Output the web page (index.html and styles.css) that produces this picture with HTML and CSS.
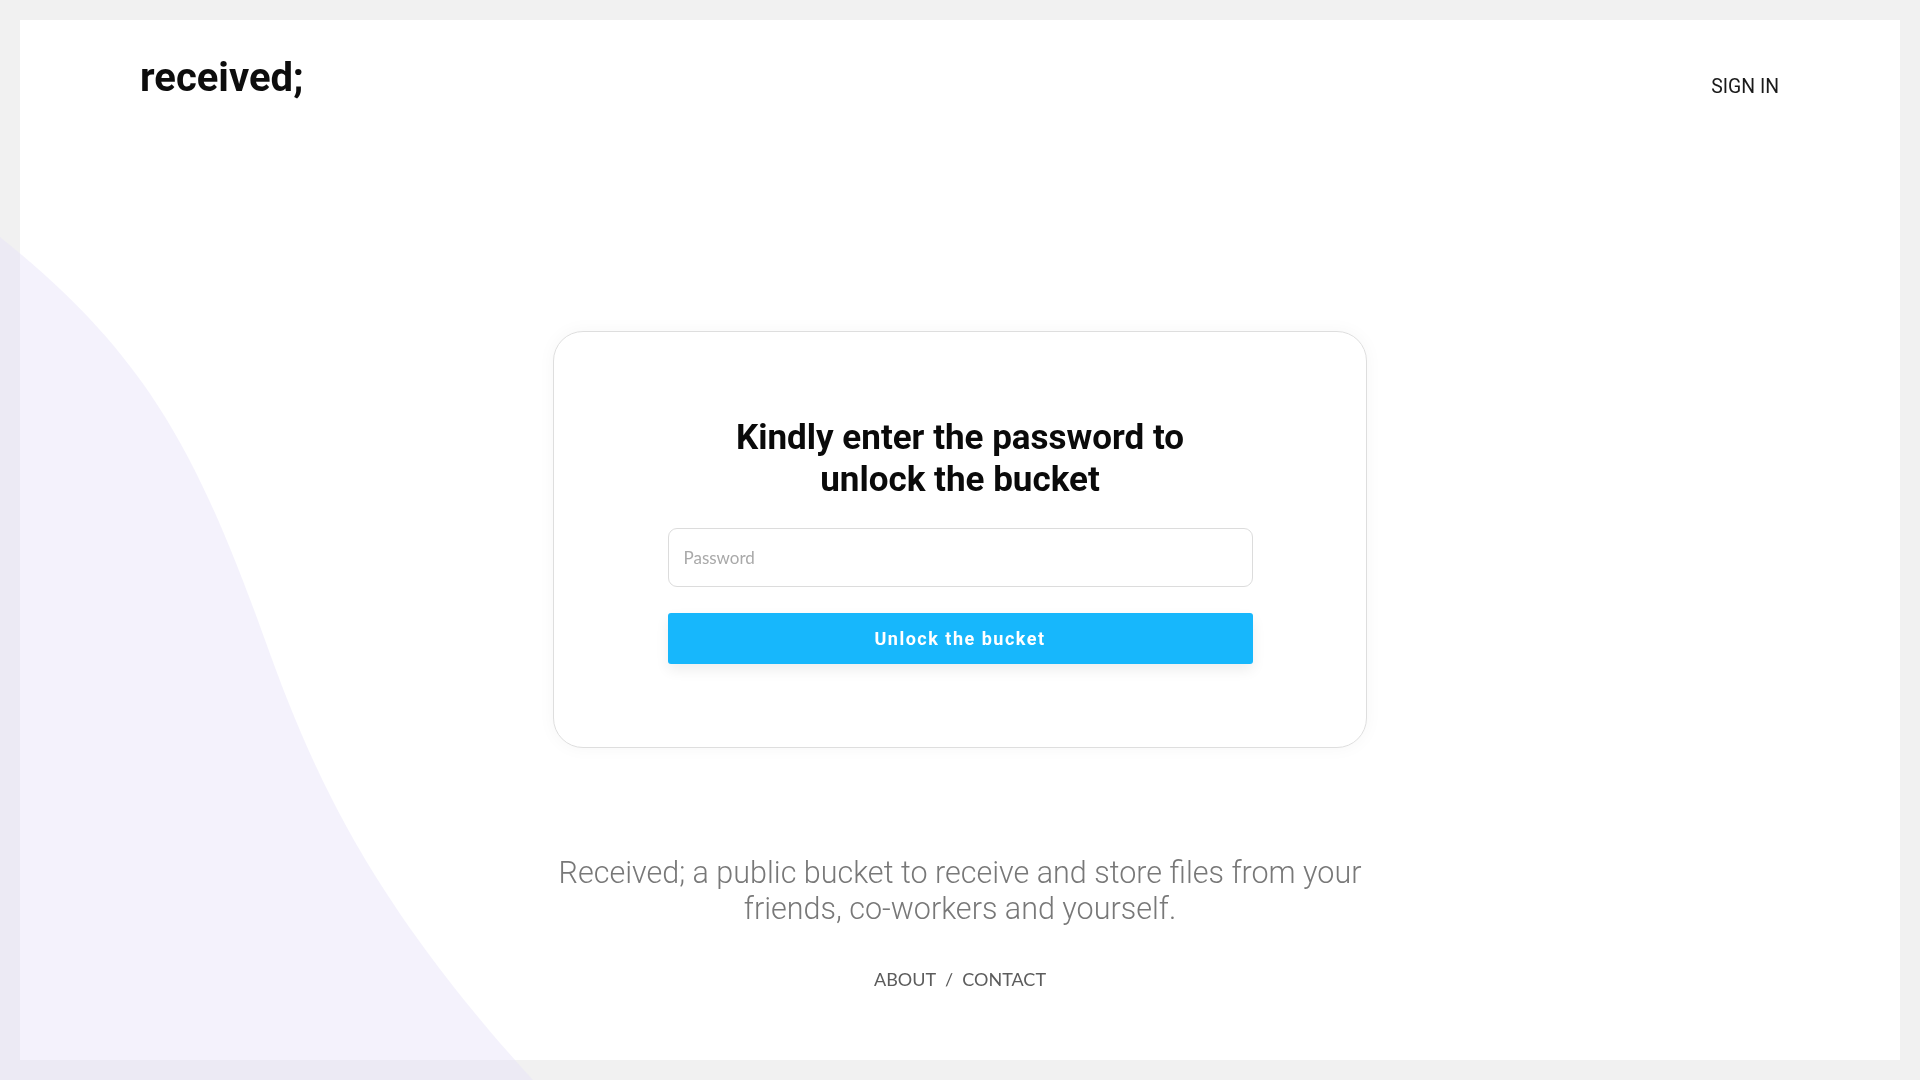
FILE: index.html
```html
<!DOCTYPE html>
<html lang="en">
<head>
<meta charset="utf-8">
<title>received;</title>
<link rel="stylesheet" href="styles.css">
</head>
<body>
<svg class="blob" viewBox="0 0 1920 1080" preserveAspectRatio="none" aria-hidden="true">
  <path d="M0,237 C140,349 195,444 265,640 C315,780 373,904 533,1080 L0,1080 Z"/>
</svg>
<div class="frame">
  <header class="header">
    <a class="logo" href="#">received;</a>
    <a class="signin" href="#">SIGN IN</a>
  </header>
  <main class="main">
    <section class="card">
      <h1 class="card-title">Kindly enter the password to<br>unlock the bucket</h1>
      <form class="form">
        <input class="input" type="password" placeholder="Password">
        <button class="button" type="button">Unlock the bucket</button>
      </form>
    </section>
    <p class="tagline">Received; a public bucket to receive and store files from your friends, co-workers and yourself.</p>
    <nav class="links">
      <a href="#">ABOUT</a><span class="sep">/</span><a href="#">CONTACT</a>
    </nav>
  </main>
</div>
</body>
</html>
```

FILE: styles.css
```css
* { box-sizing: border-box; }

html, body {
  margin: 0;
  padding: 0;
}

body {
  background: #f1f1f1;
  font-family: Roboto, "Liberation Sans", sans-serif;
  color: #111;
  width: 1920px;
  height: 1080px;
  overflow: hidden;
  padding: 20px;
}

.blob {
  position: fixed;
  left: 0;
  top: 0;
  width: 1920px;
  height: 1080px;
  z-index: 1;
  pointer-events: none;
}

.blob path {
  fill: rgb(230, 226, 248);
  opacity: 0.45;
}

.frame {
  background: #fff;
  width: 1880px;
  height: 1040px;
  display: flex;
  flex-direction: column;
}

.header {
  position: relative;
  z-index: 2;
  display: flex;
  justify-content: space-between;
  align-items: flex-start;
  padding: 34px 121px 0 120px;
}

.logo {
  font-family: Roboto, sans-serif;
  font-weight: 700;
  font-size: 40px;
  line-height: 47px;
  color: #0d0d0d;
  text-decoration: none;
}

.signin {
  margin-top: 22px;
  font-family: Roboto, sans-serif;
  font-size: 19.4px;
  line-height: 22px;
  color: #1a1a1a;
  text-decoration: none;
}

.main {
  position: relative;
  z-index: 2;
  display: flex;
  flex-direction: column;
  align-items: center;
  padding-top: 230px;
}

.card {
  width: 814px;
  height: 417px;
  border: 1px solid #dedede;
  border-radius: 30px;
  background: #fff;
  box-shadow: 0 0 18px rgba(0, 0, 0, 0.04);
  padding: 85px 114px 0 114px;
  display: flex;
  flex-direction: column;
  align-items: center;
}

.card-title {
  margin: 0;
  font-family: Roboto, sans-serif;
  font-weight: 700;
  font-size: 35px;
  line-height: 42px;
  text-align: center;
  color: #0a0a0a;
}

.form {
  width: 585px;
  margin-top: 27px;
  display: flex;
  flex-direction: column;
  gap: 26px;
}

.input {
  width: 100%;
  height: 59px;
  border: 1px solid #dcdcdc;
  border-radius: 9px;
  padding: 0 15px;
  font-family: Lato, sans-serif;
  font-size: 17px;
  color: #333;
  background: #fff;
  outline: none;
}

.input::placeholder {
  color: #a9a9a9;
}

.button {
  width: 100%;
  height: 51px;
  border: none;
  border-radius: 3px;
  background: #17b7fc;
  color: #fff;
  font-family: Roboto, sans-serif;
  font-weight: 700;
  font-size: 18px;
  letter-spacing: 1.5px;
  box-shadow: 0 6px 14px rgba(0, 0, 0, 0.07);
  cursor: pointer;
}

.tagline {
  width: 814px;
  margin: 107px 0 0 0;
  font-family: Roboto, sans-serif;
  font-weight: 300;
  font-size: 30.5px;
  line-height: 36px;
  color: #787878;
  text-align: center;
}

.links {
  margin-top: 41px;
  font-family: Lato, sans-serif;
  font-size: 18px;
  line-height: 22px;
  color: #5c5c5c;
}

.links a {
  color: #5c5c5c;
  text-decoration: none;
}

.links .sep {
  margin: 0 9px;
}
```
